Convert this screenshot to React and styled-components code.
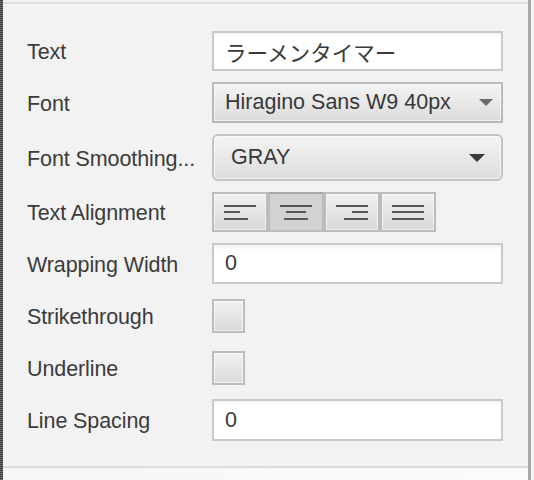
import React from "react";
import styled, { createGlobalStyle } from "styled-components";

const GlobalStyle = createGlobalStyle`
  html, body {
    margin: 0;
    padding: 0;
    background: #f2f2f2;
  }
  * {
    box-sizing: border-box;
  }
`;

const Frame = styled.div`
  display: flex;
  width: 534px;
  height: 480px;
  overflow: hidden;
  font-family: "Liberation Sans", "Noto Sans CJK JP", sans-serif;
  color: #3b3b3b;
`;

/* window edges */
const DottedEdge = styled.div`
  width: 3px;
  background: repeating-linear-gradient(#3c3c3c 0 1px, #6e6e6e 1px 2px);
`;

const RightRule = styled.div`
  width: 3px;
  background: #a9a9a9;
`;

const Gutter = styled.div`
  width: 3px;
  background: #f5f5f5;
`;

const Panel = styled.div`
  flex: 1;
  display: flex;
  flex-direction: column;
  background: #f2f2f2;
`;

const TopRule = styled.div`
  margin-top: 2px;
  height: 2px;
  background: #dedede;
`;

const BottomRule = styled.div`
  height: 2px;
  background: #dcdcdc;
`;

const Footer = styled.div`
  height: 12px;
  background: linear-gradient(90deg, #f6f6f6, #fbfbfb);
`;

/* form */
const Form = styled.div`
  flex: 1;
  display: grid;
  grid-template-columns: 185px 291px;
  grid-auto-rows: auto;
  row-gap: 11px;
  align-content: start;
  align-items: center;
  padding: 27px 0 0 24px;
`;

const Label = styled.div`
  padding-top: 3px;
  font-size: 21.5px;
  letter-spacing: -0.1px;
  white-space: nowrap;
`;

const TextField = styled.div`
  height: ${(p) => p.$h || 41}px;
  display: flex;
  align-items: center;
  padding-left: 11px;
  background: #fff;
  border: 2px solid #c9c9c9;
  box-shadow: inset 0 4px 4px -2px rgba(0, 0, 0, 0.07);
  font-size: 21.5px;
  color: #3a3a3a;
`;

const Combo = styled.div`
  height: ${(p) => (p.$rounded ? 47 : 41)}px;
  display: flex;
  align-items: center;
  justify-content: space-between;
  padding: ${(p) => (p.$rounded ? "0 16px 0 17px" : "0 8px 0 11px")};
  border: 2px solid ${(p) => (p.$rounded ? "#c3c3c3" : "#b9b9b9")};
  border-radius: ${(p) => (p.$rounded ? 6 : 1)}px;
  background: linear-gradient(#f4f4f4, #dcdcdc);
  box-shadow: inset 0 0 0 1px rgba(255, 255, 255, 0.6);
  font-size: 21.5px;
  color: #383838;
`;

const Arrow = styled.span`
  width: 0;
  height: 0;
  border-left: ${(p) => p.$w / 2}px solid transparent;
  border-right: ${(p) => p.$w / 2}px solid transparent;
  border-top: ${(p) => p.$h}px solid ${(p) => p.$color};
`;

const AlignGroup = styled.div`
  display: flex;
`;

const AlignButton = styled.div`
  width: 56px;
  height: 40px;
  display: flex;
  flex-direction: column;
  justify-content: center;
  align-items: ${(p) => p.$align};
  gap: 4.5px;
  padding: 0 10px;
  border: 2px solid #bcbcbc;
  border-top-color: ${(p) => (p.$selected ? "#a8a8a8" : "#bcbcbc")};
  background: ${(p) =>
    p.$selected ? "#d2d2d2" : "linear-gradient(#f0f0f0, #d9d9d9)"};
  box-shadow: ${(p) =>
    p.$selected ? "none" : "inset 0 0 0 1px rgba(255,255,255,0.55)"};
`;

const Bar = styled.span`
  display: block;
  width: ${(p) => p.$w}px;
  height: 2px;
  background: #555;
`;

const CheckRow = styled.div`
  height: 41px;
  display: flex;
  align-items: center;
`;

const CheckBox = styled.div`
  width: 33px;
  height: 34px;
  border: 2px solid #bdbdbd;
  background: linear-gradient(#f1f1f1, #dadada);
  box-shadow: inset 0 0 0 1px rgba(255, 255, 255, 0.6);
`;

const alignments = [
  { align: "flex-start", bars: [32, 16, 24] },
  { align: "center", bars: [32, 20, 24], selected: true },
  { align: "flex-end", bars: [32, 16, 24] },
  { align: "stretch", bars: [32, 32, 32] },
];

export default function App() {
  return (
    <>
      <GlobalStyle />
      <Frame>
        <DottedEdge />
        <Panel>
          <TopRule />
          <Form>
            <Label>Text</Label>
            <TextField $h={40}>ラーメンタイマー</TextField>

            <Label>Font</Label>
            <Combo>
              Hiragino Sans W9 40px
              <Arrow $w={14} $h={7} $color="#6a6a6a" />
            </Combo>

            <Label>Font Smoothing...</Label>
            <Combo $rounded>
              GRAY
              <Arrow $w={17} $h={8} $color="#3a3a3a" />
            </Combo>

            <Label>Text Alignment</Label>
            <AlignGroup>
              {alignments.map((a, i) => (
                <AlignButton key={i} $align={a.align} $selected={a.selected}>
                  {a.bars.map((w, j) => (
                    <Bar key={j} $w={w} />
                  ))}
                </AlignButton>
              ))}
            </AlignGroup>

            <Label>Wrapping Width</Label>
            <TextField>0</TextField>

            <Label>Strikethrough</Label>
            <CheckRow>
              <CheckBox />
            </CheckRow>

            <Label>Underline</Label>
            <CheckRow>
              <CheckBox />
            </CheckRow>

            <Label>Line Spacing</Label>
            <TextField $h={42}>0</TextField>
          </Form>
          <BottomRule />
          <Footer />
        </Panel>
        <RightRule />
        <Gutter />
      </Frame>
    </>
  );
}
